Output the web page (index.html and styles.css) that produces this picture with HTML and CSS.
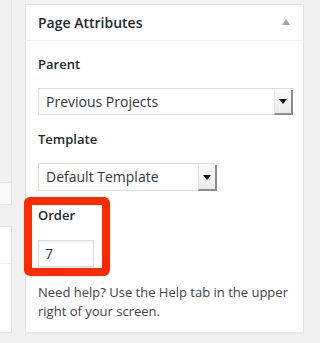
FILE: index.html
```html
<!DOCTYPE html>
<html>
<head>
<meta charset="utf-8">
<link rel="stylesheet" href="styles.css">
</head>
<body>
<div class="page">
  <div class="side">
    <div class="side-top"></div>
    <div class="side-strip"></div>
    <div class="side-box">
      <div class="side-row"></div>
    </div>
  </div>
  <div class="panel">
    <div class="panel-head">
      <h2 class="panel-title">Page Attributes</h2>
      <span class="toggle"></span>
    </div>
    <div class="panel-body">
      <p class="label first">Parent</p>
      <div class="select wide">
        <span class="select-text">Previous Projects</span>
        <span class="select-btn"><span class="caret"></span></span>
      </div>
      <p class="label">Template</p>
      <div class="select narrow">
        <span class="select-text">Default Template</span>
        <span class="select-btn"><span class="caret"></span></span>
      </div>
      <div class="order">
        <p class="label">Order</p>
        <div class="num-input">7</div>
      </div>
      <p class="help">Need help? Use the Help tab in the upper right of your screen.</p>
    </div>
  </div>
</div>
</body>
</html>
```

FILE: styles.css
```css
html, body {
  margin: 0;
  padding: 0;
  background: #f1f1f1;
}
.page {
  display: flex;
  align-items: flex-start;
  width: 320px;
  height: 343px;
  overflow: hidden;
  font-family: "Open Sans", "Noto Sans", sans-serif;
  color: #444;
}
.side {
  width: 12px;
  display: flex;
  flex-direction: column;
  margin-right: 13px;
}
.side-top {
  height: 183px;
  background: #f1f1f1;
  border-right: 1px solid #e2e2e2;
  border-bottom: 1px solid #e2e2e2;
  box-sizing: border-box;
}
.side-strip {
  height: 22px;
  background: #f9f9f9;
  border-right: 1px solid #e2e2e2;
  border-bottom: 1px solid #e2e2e2;
  box-sizing: border-box;
}
.side-box {
  margin-top: 21px;
  height: 107px;
  background: #fff;
  border-right: 1px solid #e2e2e2;
  border-top: 1px solid #e2e2e2;
  border-bottom: 1px solid #e2e2e2;
  box-sizing: border-box;
}
.side-row {
  height: 36px;
  border-bottom: 1px solid #eee;
}
.panel {
  margin-top: 4px;
  width: 279px;
  height: 329px;
  box-sizing: border-box;
  background: #fff;
  border: 1px solid #e5e5e5;
  box-shadow: 0 1px 1px rgba(0,0,0,0.04);
}
.panel-head {
  height: 35px;
  border-bottom: 1px solid #eee;
  display: flex;
  align-items: center;
  justify-content: space-between;
  padding: 0 13px 0 12px;
}
.panel-title {
  margin: 0;
  font-size: 14px;
  font-weight: 600;
  line-height: 35px;
  color: #23282d;
}
.toggle {
  width: 0;
  height: 0;
  border-left: 4px solid transparent;
  border-right: 4px solid transparent;
  border-bottom: 6px solid #a0a5aa;
  margin-top: -2px;
}
.panel-body {
  padding: 14px 12px 0 12px;
}
.label {
  margin: 15px 0 0 0;
  font-size: 13px;
  font-weight: 600;
  line-height: 18px;
  color: #23282d;
}
.label.first {
  margin-top: 0;
}
.select {
  margin-top: 15px;
  height: 27px;
  box-sizing: border-box;
  border: 1px solid #ddd;
  border-right: none;
  border-bottom: 1px solid #ddd;
  display: flex;
  align-items: stretch;
  background: #fff;
  position: relative;
}
.select.wide { width: 255px; }
.select.narrow { width: 179px; height: 28px; }
.select-text {
  flex: 1;
  font-size: 14px;
  line-height: 25px;
  padding-left: 7px;
  color: #32373c;
}
.select-btn {
  width: 16px;
  background: linear-gradient(#fafafa, #ececec);
  border-left: 1px solid #e6e6e6;
  border-right: 2px solid #8c8c8c;
  border-bottom: 2px solid #8c8c8c;
  margin-bottom: -1px;
  margin-top: 1px;
  display: flex;
  align-items: center;
  justify-content: center;
}
.caret {
  width: 0;
  height: 0;
  border-left: 4px solid transparent;
  border-right: 4px solid transparent;
  border-top: 5px solid #111;
}
.order {
  position: relative;
}
.order::before {
  content: "";
  position: absolute;
  left: -14px;
  top: -9px;
  width: 86px;
  height: 79px;
  box-sizing: border-box;
  border: 8px solid #fd2a00;
  border-radius: 6px;
}
.num-input {
  margin-top: 16px;
  width: 56px;
  height: 27px;
  box-sizing: border-box;
  border: 1px solid #ddd;
  font-size: 14px;
  line-height: 25px;
  padding-left: 6px;
  color: #32373c;
  box-shadow: inset 0 1px 2px rgba(0,0,0,0.07);
}
.help {
  margin: 16px 0 0 0;
  font-size: 13px;
  line-height: 19px;
  color: #444;
}
```
